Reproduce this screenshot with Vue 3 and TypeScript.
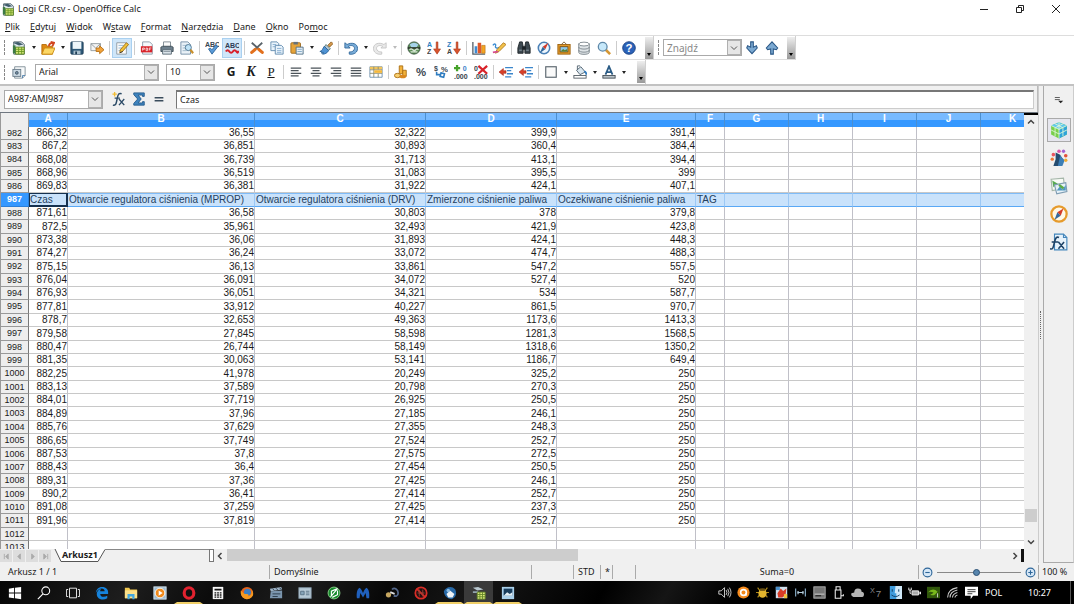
<script setup lang="ts">
import { ref } from 'vue'

const icons: Record<string, string> = {
  calc: '<path d="M2 1h9l3 3v11H2z" fill="#dfe9ee" stroke="#44565f"/><path d="M1 2l6-1 6 3-5 1z" fill="#3f5c6b"/><path d="M4 7h10v8H4z" fill="#d4e57a" stroke="#55801f"/><path d="M4 9.5h10M4 12h10M7.500 7v8M11 7v8" stroke="#6c9a22"/><path d="M1 5h3v9H1z" fill="#3c7a45"/>',
  open: '<path d="M1 4h5l1 2h6v9H1z" fill="#e08a13" stroke="#b56a08"/><path d="M4 8h12l-3 7H1z" fill="#fcd765" stroke="#c98a12"/><path d="M9 6c0-3 2-4 5-4M11 1l4 1-2 4" fill="none" stroke="#d2451e" stroke-width="2"/>',
  save: '<rect x="1" y="1" width="14" height="14" rx="1" fill="#2d5878" stroke="#1d3c55"/><rect x="3" y="1" width="10" height="8" fill="#eef6fa"/><path d="M4 11h8v4H4z" fill="#a9bfcd"/><path d="M6 12h2v3H6z" fill="#1d3c55"/>',
  mail: '<path d="M1 3h11v8H1z" fill="#f4f4f4" stroke="#8e979c"/><path d="M1 3l5.500 5L12 3" fill="none" stroke="#8e979c"/><path d="M7 8h4V5.500l5 4.500-5 4.500V12H7z" fill="#f2a33a" stroke="#b56e14"/>',
  edit: '<path d="M2 2h11v13H2z" fill="#fbfbfb" stroke="#8c98a0"/><path d="M4 5h6M4 8h4M4 11h3" stroke="#8ab0d0"/><path d="M13 2l2.500 2-7 8-3 1.500L6 10z" fill="#f0c23a" stroke="#9a6a12"/><path d="M5.500 13.500L9 12" stroke="#333"/>',
  pdf: '<path d="M3 1h8l3 3v11H3z" fill="#f5f8fb" stroke="#8695a3"/><path d="M1 6h13v7H1z" fill="#d8232a"/><path d="M3 11V8h2v1.500H3M7 8v3h1.500V8zM10.500 11V8H13M10.500 9.500H12" stroke="#fff" fill="none" stroke-width=".8"/>',
  print: '<path d="M4 1h8v6H4z" fill="#fafafa" stroke="#77838b"/><path d="M1 7l2-1h10l2 1v5H1z" fill="#6d7f8c" stroke="#3c4a54"/><path d="M3 10h10v5H3z" fill="#dbe4ea" stroke="#54636e"/><path d="M4 12h8" stroke="#88959e"/>',
  preview: '<path d="M1 1h8l3 3v11H1z" fill="#e9f1f7" stroke="#6e8aa3"/><path d="M3 5h5M3 8h4M3 11h4" stroke="#9cb6ca"/><circle cx="9.500" cy="7.500" r="3.500" fill="#bfe3f7" stroke="#48708d"/><path d="M12 10l3 4" stroke="#c9902c" stroke-width="2.400"/>',
  spell: '<text x="0" y="7" font-size="8" font-weight="700" fill="#3a4652">ABC</text><path d="M4 9l4 6 7-9-3-1-4 5-2-2z" fill="#5b9bd8" stroke="#2f6699"/>',
  autospell: '<text x="0" y="8" font-size="8" font-weight="700" fill="#2d3c55">ABC</text><path d="M1 12q2-3 4 0t4 0 4 0 2-1" fill="none" stroke="#d8202a" stroke-width="2.400"/>',
  cut: '<path d="M2 2l9 8M14 2L5 10" stroke="#59636a" stroke-width="2"/><path d="M10 9.500l4 3.500M6 9.500L2 13" stroke="#e2701d" stroke-width="3.600" stroke-linecap="round"/>',
  copy: '<path d="M1 1h7l2 2v8H1z" fill="#e9f3fb" stroke="#5e88ad"/><path d="M3 4h4M3 6.500h4" stroke="#85add0"/><path d="M6 5h7l2 2v8H6z" fill="#e9f3fb" stroke="#5e88ad"/><path d="M8 8.500h5M8 11h5M8 13h5" stroke="#85add0"/>',
  paste: '<rect x="1" y="2" width="11" height="12" rx="1" fill="#e6a43a" stroke="#9a671a"/><path d="M4 1h5v3H4z" fill="#66737c"/><path d="M7 7h8v8H7z" fill="#e7f1f8" stroke="#4c6b84"/><path d="M8.500 9.500h5M8.500 12h5" stroke="#7ba3c4"/>',
  brush: '<path d="M10 5l4-4 2 2-4 4z" fill="#d69a50" stroke="#8c5b1c"/><path d="M8 4l5 5-3 2-4-4z" fill="#b7c6d1" stroke="#577"/><path d="M6 6l5 5c-2 3-4 4-7 4l1-2-2 1v-2l-2 0c3-1 3-3 5-6z" fill="#4f93d4" stroke="#2c6297"/>',
  undo: '<path d="M1 2v6h6L5 6c4-2 7 0 7 2.500S9 13 6 12.500v2.500c6 1 9.500-2.500 9.500-6.500C15.500 3 9 1 3.500 4z" fill="#79acd8" stroke="#2f6699"/>',
  redo: '<path d="M15 2v6H9l2-2C7 4 4 6 4 8.500S7 13 10 12.500v2.500C4 16 .5 12.500.5 8.500.5 3 7 1 12.500 4z" fill="#e9e9e9" stroke="#c3c3c3"/>',
  globe: '<circle cx="8" cy="8" r="7" fill="#5c8f57" stroke="#334e39"/><path d="M3 4q5-4 10 0l-2 3H5z" fill="#a6d2e9"/><path d="M1 8h14" stroke="#222" stroke-width="1.500"/><path d="M3 10q1.500-2 3.500 0t3.500 0 3 0M4 12.500h8" stroke="#d9e8d7" stroke-width="1.500" fill="none"/>',
  az: '<text x="0" y="7" font-size="8" font-weight="700" fill="#2e7fc2">A</text><text x="0" y="15" font-size="8" font-weight="700" fill="#444">Z</text><path d="M10.500 1h2v8h3L11.500 15 7.500 9h3z" fill="#d8532d" stroke="#a33214" stroke-width=".6"/>',
  za: '<text x="0" y="7" font-size="8" font-weight="700" fill="#2e7fc2">Z</text><text x="0" y="15" font-size="8" font-weight="700" fill="#444">A</text><path d="M10.500 1h2v8h3L11.500 15 7.500 9h3z" fill="#d8532d" stroke="#a33214" stroke-width=".6"/>',
  chart: '<path d="M1 1v14h14" fill="none" stroke="#55606a" stroke-width="1.500"/><path d="M3 6h3v8H3z" fill="#3f8bd0"/><path d="M6.500 2h4v12h-4z" fill="#e0582a"/><path d="M11 5h4v9h-4z" fill="#f5a623" stroke="#a5640d" stroke-width=".6"/>',
  draw: '<path d="M1 5c2-3 4-1 3 1s3 3 4 1" fill="none" stroke="#3a8bd2" stroke-width="1.500"/><path d="M13 2l3 2-8 8-4 2 1.500-4z" fill="#f2c14a" stroke="#b07a1b"/><path d="M1 13l6-1" stroke="#d54a8f" stroke-width="2"/>',
  find: '<path d="M3 1h3l1 5v8H1V8zM10 1h3l2 7v6H9V6z" fill="#3d4850" stroke="#1c2226"/><path d="M6 6h4v4H6z" fill="#1c2226"/><path d="M2.500 10.500h3M10.500 10.500h3" stroke="#94a3ad"/>',
  navigator: '<circle cx="8" cy="8" r="6.500" fill="#eef6fd" stroke="#4a80b6" stroke-width="1.800"/><path d="M13 2L9.500 9.500 6.500 6.500z" fill="#d53a28"/><path d="M3 14l3.500-7.500 3 3z" fill="#34699d"/>',
  gallery: '<rect x="1" y="4" width="14" height="11" fill="#e39a2b" stroke="#99600f"/><path d="M5 4l3-3 3 3" fill="none" stroke="#74552a"/><rect x="3.500" y="6.500" width="9" height="6" fill="#8dc7ec" stroke="#7a4c0a"/><path d="M4 12l3-3 2 1.500 2-1.500 1 3z" fill="#56812f"/>',
  data: '<path d="M2 3v10c0 3 12 3 12 0V3z" fill="#dfe4e7" stroke="#778188"/><ellipse cx="8" cy="3.500" rx="6" ry="2.200" fill="#fff" stroke="#778188"/><path d="M2 7c0 3 12 3 12 0M2 10.500c0 3 12 3 12 0" fill="none" stroke="#778188"/>',
  zoom: '<path d="M10 10l5 5" stroke="#d59734" stroke-width="3"/><circle cx="6.500" cy="6.500" r="5" fill="#c6e8fa" stroke="#5f89a9" stroke-width="1.500"/>',
  help: '<circle cx="8" cy="8" r="7.200" fill="#2b62b8" stroke="#173f80"/><text x="8" y="12.500" font-size="13" font-weight="700" text-anchor="middle" fill="#fff">?</text>',
  styles: '<path d="M3 2h12v10l-3 3H3z" fill="#f7f9fa" stroke="#7b8992"/><rect x="1" y="5" width="9" height="8" fill="#cbd9e3" stroke="#667987"/><circle cx="5.500" cy="9" r="1.600" fill="#7793a8" stroke="#456" stroke-width="1"/><path d="M12 15v-3h3" fill="none" stroke="#4b7fae"/>',
  left: '<path d="M2 3.500h12M2 6.500h9M2 9.500h12M2 12.500h9" stroke="#4b5359" stroke-width="1.300"/>',
  center: '<path d="M2 3.500h12M4 6.500h8M2 9.500h12M4 12.500h8" stroke="#4b5359" stroke-width="1.300"/>',
  right: '<path d="M2 3.500h12M5 6.500h9M2 9.500h12M5 12.500h9" stroke="#4b5359" stroke-width="1.300"/>',
  justify: '<path d="M2 3.500h12M2 6.500h12M2 9.500h12M2 12.500h12" stroke="#4b5359" stroke-width="1.300"/>',
  merge: '<path d="M1 2h14v12H1z" fill="#fff" stroke="#6d8fae"/><path d="M1 2h14v3H1z" fill="#f2c55c"/><path d="M1 5.500h14M1 9.500h14M5.500 2v12M10.500 2v3M10.500 10v4" stroke="#8a8a6d"/><path d="M6 6h9v3H6z" fill="#f6b93b"/>',
  currency: '<path d="M6 1h4v9H6z" fill="#f3b33b" stroke="#a86c10"/><path d="M10 6h4v7h-4z" fill="#f3b33b" stroke="#a86c10"/><ellipse cx="4" cy="12" rx="3.500" ry="2.500" fill="#f8d071" stroke="#a86c10"/><ellipse cx="10" cy="13" rx="4" ry="2" fill="#d9871e"/>',
  percent: '<text x="8" y="13" font-size="13" font-weight="700" text-anchor="middle" fill="#3c4852">%</text>',
  standard: '<text x="0" y="7" font-size="8" font-weight="700" fill="#3c4852">$</text><text x="8" y="8" font-size="9" font-weight="700" fill="#3c4852">%</text><path d="M3 8v3h4M8 9l4 1-1 4-4-1z" fill="none" stroke="#2f7cc0" stroke-width="1.800"/>',
  adddec: '<path d="M3.500 0v7M0 3.500h7" stroke="#46a32a" stroke-width="2.600"/><text x="10" y="7" font-size="8" font-weight="700" fill="#3b82c9">0</text><text x="0" y="15.500" font-size="8" font-weight="700" fill="#333e48">.000</text>',
  deldec: '<text x="0" y="7" font-size="8" font-weight="700" fill="#333e48">0</text><text x="0" y="15.500" font-size="8" font-weight="700" fill="#333e48">.000</text><path d="M5 1l10 9M15 1L5 10" stroke="#d8232a" stroke-width="2.600"/>',
  outdent: '<path d="M7 3h9M9 6.500h5M9 10h7M7 13.500h7" stroke="#3b86cc" stroke-width="1.500"/><path d="M0 8l5-4v2.500h3v3H5V12z" fill="#d8402a" stroke="#9c2414" stroke-width=".6"/>',
  border: '<rect x="2" y="2" width="12" height="12" fill="#fafafa" stroke="#59646d" stroke-width="1.300"/>',
  fill: '<path d="M4 6l5-4 5 6-6 3z" fill="#d9e6ef" stroke="#4a5c6a"/><path d="M5 5V1h3" fill="none" stroke="#4a5c6a"/><path d="M13 7q3 2 1.500 4" stroke="#2f7cc0" stroke-width="2" fill="none"/><rect x="1" y="12" width="14" height="3" fill="#fff" stroke="#505a62"/>',
  font: '<path d="M4 11L8 1.500l4 9.500M5.500 8h5" fill="none" stroke="#2b5c86" stroke-width="2"/><rect x="1" y="12" width="14" height="3" fill="#b9c2c9" stroke="#404a52"/>',
  down: '<path d="M6.500 1h3v6L13 5.500l1 2.500-6 6.500L2 8l1-2.500L6.500 7z" fill="#7ba9d2" stroke="#2a5786" stroke-width="1.200"/>',
  up: '<path d="M6.500 15h3V9L13 10l1.500-2L8 1 1.500 8 3 10l3.500-1z" fill="#7ba9d2" stroke="#2a5786" stroke-width="1.200"/>',
  fx: '<path d="M1 15c4 1 4-3 5-8s2-6 5-5M3 7h6" fill="none" stroke="#2b4a66" stroke-width="1.700"/><path d="M8 8l6 7M14 8l-6 7" stroke="#2b4a66" stroke-width="1.500"/><path d="M3 0v5M.5 2.500h5" stroke="#f0bd35" stroke-width="1.500"/>',
  sum: '<path d="M2 1h12v4h-2V3.500H7L10.500 8 7 12.500h5V11h2v4H2v-2l4.500-5L2 3z" fill="#3f83bd" stroke="#245a8b"/>',
  equals: '<path d="M3 6.500h10M3 10h10" stroke="#3a4c5c" stroke-width="1.800"/>',
  cube: '<path d="M8 1l7 3v8l-7 3.500L1 12V4z" fill="#78cf4b"/><path d="M8 8l7-4v8l-7 3.500z" fill="#2ea3dc"/><path d="M1 4l7-3 7 3-7 3.500z" fill="#62c8ee"/><path d="M8 1v14.500M1 8l7 3.500L15 8M1 4l7 3.500L15 4M4.500 2.500l7 3.500v7.500M11.500 2.500l-7 3.500v7.500" fill="none" stroke="#ddf6d5" stroke-width=".8"/>',
  styleset: '<path d="M5 3l4 2 3 5-2 5H3l2-6z" fill="#244c70"/><path d="M9 6l4 4-2 5H7z" fill="#3d7fb6"/><circle cx="8" cy="2" r="1.600" fill="#dc56a8"/><circle cx="12" cy="2" r="1.500" fill="#a65fd0"/><circle cx="14" cy="6" r="1.600" fill="#e3533a"/><circle cx="3" cy="5" r="1.600" fill="#ea5562"/><circle cx="2" cy="9" r="1.500" fill="#ec7a3b"/><circle cx="14" cy="10" r="1.500" fill="#f0ad35"/>',
  picture: '<path d="M1 2l11-1 1 9-11 2z" fill="#f8fbf6" stroke="#a6b7aa"/><path d="M2 3l5 3-4 3z" fill="#57aa52"/><path d="M4 7l10-2 1 8-9 2z" fill="#e6f1f8" stroke="#7e9cb2"/><path d="M6 12l3-4 2 3 3-4v5z" fill="#4f97be"/><path d="M8 7l4 3" stroke="#5baa43" stroke-width="2"/>',
  compass: '<circle cx="8" cy="8" r="6.800" fill="#fff8e6" stroke="#e69b2c" stroke-width="2"/><path d="M12 3L9.500 9.500 6.500 6.500z" fill="#d53a28"/><path d="M4 13l2.500-6.500 3 3z" fill="#34699d"/>',
  function: '<path d="M4 1h8l3 3v11H4z" fill="#e6f2fb" stroke="#4386bb"/><path d="M12 1v3h3" fill="none" stroke="#4386bb"/><path d="M0 14c3 1 3-2 4-6s2-5 4-4M1.500 8h6M7.500 8l5 6M12.500 8l-5 6" fill="none" stroke="#1e4367" stroke-width="1.400"/>',
  win: '<path d="M1 3l6-.9v5.400H1zM8 2l7-1v6.500H8zM1 8.500h6v5.400L1 13zM8 8.500h7V15l-7-1z" fill="#fff"/>',
  search: '<circle cx="10" cy="5.500" r="4.500" fill="none" stroke="#fff" stroke-width="1.200"/><path d="M6.800 9L1 15" stroke="#fff" stroke-width="1.300"/>',
  tasks: '<path d="M4 2.500h8v11H4zM2.500 4h-2v8h2M13.500 4h2v8h-2" fill="none" stroke="#e8e8e8" stroke-width="1.100"/>',
  edge: '<path d="M1 8c0-4 3-7 7-7 5 0 7 3 7 6v2H6c0 4 5 4 8 2v3c-5 3-12 1-12-5 0-3 2-5 5-6-1 1-1 2-1 3h5c0-5-8-4-10 2z" fill="#1683dc"/>',
  folder: '<path d="M1 2h5l1 2h8v10H1z" fill="#f1c84f"/><path d="M1 5h14v9H1z" fill="#fbe08a"/><path d="M4 9h8v6h-2.500v-3h-3v3H4z" fill="#43a7df"/>',
  media: '<rect x="1" y="1" width="14" height="14" fill="#9dbbd2" stroke="#dce8f0"/><circle cx="8" cy="8" r="5.500" fill="#f08a1c" stroke="#fff"/><path d="M6.500 5l4.500 3-4.500 3z" fill="#fff"/>',
  opera: '<ellipse cx="8" cy="8" rx="5.500" ry="6" fill="none" stroke="#e2222f" stroke-width="3.600"/>',
  calculator: '<path d="M2 1h12v14H2z" fill="#f5f5f5"/><path d="M4 3h8v2H4zM4 7h2v1.500H4zM7 7h2v1.500H7zM10 7h2v1.500h-2zM4 9.500h2V11H4zM7 9.500h2V11H7zM10 9.500h2V11h-2zM4 12h2v1.500H4zM7 12h2v1.500H7zM10 12h2v1.500h-2z" fill="#111"/>',
  firefox: '<circle cx="8" cy="8" r="7" fill="#e8641b"/><circle cx="8.500" cy="7" r="4" fill="#3d7fc4"/><path d="M1 5c2 1 2 4 6 4 2 0 4 1 2 3 4-1 5-4 4-8 5 6 0 11-5 11S0 10 1 5z" fill="#f59a21"/>',
  clapper: '<path d="M2 6l13-1v9H1z" fill="#7b95ad"/><path d="M1 3l13-2 1 3L2 6z" fill="#9db2c5"/><path d="M4 3l2 2M8 2.500l2 2M12 2l2 2M4 9h9M4 12h6" stroke="#263645"/>',
  window: '<rect x="1" y="2" width="14" height="12" fill="#b6c9d6" stroke="#8599a8"/><path d="M3 6h4v4H3zM9 6h4M9 8h4M9 10h4" stroke="#587184" fill="#87a5ba"/>',
  green: '<circle cx="8" cy="8" r="6.800" fill="#178a2c" stroke="#8fd58e"/><path d="M4 12.500L12 3l-7 3v5M12 5v5l-6 3" fill="none" stroke="#fff" stroke-width="1.300"/>',
  malware: '<path d="M1 14c-1-7 1-11 3-12 2 1 3 4 4 6 1-2 2-5 4-6 2 1 4 5 3 12h-3l-1-6-3 5-3-5-1 6z" fill="#2060bd"/>',
  key: '<path d="M8 4c3-3 7 0 7 4s-3 4-5 3" fill="none" stroke="#53678b" stroke-width="2"/><circle cx="4" cy="10" r="3" fill="#c7a760"/><path d="M6 7l5 2" stroke="#ddd" stroke-width="2"/>',
  blocked: '<circle cx="8" cy="8" r="6.500" fill="#211" stroke="#d82d27" stroke-width="2"/><path d="M3 3l10 10" stroke="#d82d27" stroke-width="2"/><path d="M6 4v8M10 4v8M4 8h8" stroke="#9a4238"/>',
  bird: '<path d="M1 6c2-5 9-7 13-2 2 5 1 9-4 11C5 15 1 11 1 6z" fill="#2768a6"/><path d="M4 9l4-4 5 4-2 4H6z" fill="#f0f4f7"/><circle cx="6" cy="5" r="2" fill="#8dbde2"/>',
  office: '<path d="M1 2l6-1 6 3-7 1z" fill="#b8c7cf"/><path d="M1 6h6v2H1z" fill="#93a5b0"/><path d="M6 7h9v8H6z" fill="#dbe87b" stroke="#628527"/><path d="M6 9.700h9M6 12.300h9M9 7v8M12 7v8" stroke="#628527"/>',
  photo: '<path d="M1 1h14v14H1z" fill="#aad0ea"/><path d="M3 3h10v8H3z" fill="#183d5c"/><path d="M3 11l4-4 3 2 3-2v4z" fill="#e3eff6"/>',
  volume: '<path d="M1 6h3l4-4v12l-4-4H1z" fill="none" stroke="#eee"/><path d="M10 5q2 3 0 6M12 3.500q3 4.500 0 9M14 2q4 6 0 12" fill="none" stroke="#eee"/>',
  avast: '<circle cx="8" cy="8" r="7.500" fill="#f58a1c"/><circle cx="8" cy="8" r="3.500" fill="none" stroke="#fff" stroke-width="2"/><path d="M11 9v3" stroke="#fff" stroke-width="2"/>',
  bug: '<path d="M2 2l3 4M14 2l-3 4M0 8h4M12 8h4M2 14l3-4M14 14l-3-4" stroke="#b08a1c" stroke-width="1.400"/><ellipse cx="8" cy="9" rx="5" ry="5.500" fill="#e3b52e"/><path d="M5 3h6v3H5z" fill="#6b5212"/>',
  puzzle: '<rect x="1" y="1" width="14" height="14" fill="#cfe0ee"/><path d="M3 9l4-6 3 3 4-3-1 8-4 3-5 0z" fill="#d93d27"/><path d="M1 1h5v4H1z" fill="#4b90cc"/><path d="M11 10h4v5h-4z" fill="#f1c33e"/>',
  antenna: '<path d="M2 3v10M14 3v10" stroke="#7fa3bd" stroke-width="1.500"/><path d="M4 8h8M5 6v4M11 6v4" stroke="#b3cbdb" stroke-width="1.500"/>',
  disk: '<rect x="1" y="1" width="14" height="14" fill="#767676" stroke="#bbb"/><path d="M2 10h12" stroke="#ddd"/><path d="M3 12h7" stroke="#222" stroke-width="1.500"/>',
  usb: '<path d="M5 1h5v4H5zM4 5h7v10H4zM11 12h3v-2" fill="none" stroke="#eee" stroke-width="1.300"/>',
  cloud: '<path d="M3 13.500q-3.500-1-2.500-4.500L4 8q0-5 4.500-5T13 7q3 0 3 3.500 0 3-2 3z" fill="#b5b5b5"/>',
  x7: '<text x="0" y="9" font-size="9" fill="#888">X</text><text x="7" y="14" font-size="12" fill="#888">7</text>',
  finder: '<rect x="1" y="0" width="15" height="16" fill="#3f9bdc"/><path d="M8 0h8v16H9V9H7z" fill="#d0e8f8"/><path d="M4 4v3M12 4v3M3 11q5 4 10 0" stroke="#123e65" fill="none" stroke-width="1.200"/>',
  battery: '<path d="M5 6h8v5H5z" fill="#aaa" stroke="#eee" stroke-width="1.200"/><path d="M14 7h2v3h-2z" fill="#eee"/><path d="M1 2v3h3V2M2.500 5v4H4" fill="none" stroke="#eee" stroke-width="1.200"/>',
  nvidia: '<rect y="1" width="16" height="14" fill="#31570c"/><path d="M1 8q6-7 12-1-5 7-9 3 2 1 4-2-4-2-7 0z" fill="#78b81a"/><path d="M13 9v5" stroke="#eee"/>',
  wifi: '<path d="M2 14Q2 4 14 2M5 14q0-7 9-9M8 14q0-4 6-6M11 14q0-2 3-3" fill="none" stroke="#ccc" stroke-width="1.300"/>',
  notice: '<path d="M0 1h16v11h-6l-3 4v-4H0z" fill="#fff"/><path d="M3 4.500h10M3 7h10M3 9.500h6" stroke="#111"/>',
}

interface Tool { icon?: string; label?: string; sep?: boolean; menu?: boolean; on?: boolean; off?: boolean; glyph?: string; cls?: string }
const sep: Tool = { sep: true }
const standard: Tool[] = [
  { icon: 'calc', label: 'Nowy', menu: true }, { icon: 'open', label: 'Otwórz', menu: true },
  { icon: 'save', label: 'Zapisz' }, { icon: 'mail', label: 'Wyślij e-mail' }, sep,
  { icon: 'edit', label: 'Edytuj plik', on: true }, sep,
  { icon: 'pdf', label: 'Eksportuj PDF' }, { icon: 'print', label: 'Drukuj' }, { icon: 'preview', label: 'Podgląd' }, sep,
  { icon: 'spell', label: 'Pisownia' }, { icon: 'autospell', label: 'Autopisownia', on: true }, sep,
  { icon: 'cut', label: 'Wytnij' }, { icon: 'copy', label: 'Kopiuj' }, { icon: 'paste', label: 'Wklej', menu: true }, { icon: 'brush', label: 'Malarz formatów' }, sep,
  { icon: 'undo', label: 'Cofnij', menu: true }, { icon: 'redo', label: 'Przywróć', menu: true, off: true }, sep,
  { icon: 'globe', label: 'Hiperłącze' }, { icon: 'az', label: 'Sortuj rosnąco' }, { icon: 'za', label: 'Sortuj malejąco' }, sep,
  { icon: 'chart', label: 'Wykres' }, { icon: 'draw', label: 'Rysunek' }, sep,
  { icon: 'find', label: 'Znajdź i zamień' }, { icon: 'navigator', label: 'Nawigator' }, { icon: 'gallery', label: 'Galeria' },
  { icon: 'data', label: 'Źródła danych' }, { icon: 'zoom', label: 'Powiększenie' }, sep,
  { icon: 'help', label: 'Pomoc' },
]
const formatting: Tool[] = [
  { glyph: 'G', cls: 'bold', label: 'Pogrubienie' }, { glyph: 'K', cls: 'ital', label: 'Kursywa' }, { glyph: 'P', cls: 'under', label: 'Podkreślenie' }, sep,
  { icon: 'left', label: 'Do lewej' }, { icon: 'center', label: 'Do środka' }, { icon: 'right', label: 'Do prawej' }, { icon: 'justify', label: 'Wyjustuj' }, { icon: 'merge', label: 'Scal komórki' }, sep,
  { icon: 'currency', label: 'Waluta' }, { icon: 'percent', label: 'Procent' }, { icon: 'standard', label: 'Format standardowy' }, { icon: 'adddec', label: 'Dodaj miejsce dziesiętne' }, { icon: 'deldec', label: 'Usuń miejsce dziesiętne' }, sep,
  { icon: 'outdent', label: 'Zmniejsz wcięcie' }, { icon: 'outdent', label: 'Zwiększ wcięcie' }, sep,
  { icon: 'border', label: 'Krawędzie', menu: true }, { icon: 'fill', label: 'Kolor tła', menu: true }, { icon: 'font', label: 'Kolor czcionki', menu: true },
]
const menus: [string, string, string][] = [
  ['', 'P', 'lik'], ['', 'E', 'dytuj'], ['', 'W', 'idok'], ['W', 's', 'taw'], ['', 'F', 'ormat'],
  ['', 'N', 'arzędzia'], ['', 'D', 'ane'], ['', 'O', 'kno'], ['Po', 'm', 'oc'],
]
const deck = [
  { icon: 'cube', label: 'Właściwości' }, { icon: 'styleset', label: 'Style' }, { icon: 'picture', label: 'Galeria' },
  { icon: 'compass', label: 'Nawigator' }, { icon: 'function', label: 'Funkcje' },
]
const apps = ['win', 'search', 'tasks', 'edge', 'folder', 'media', 'opera', 'calculator', 'firefox', 'clapper', 'window', 'green', 'malware', 'key', 'blocked', 'bird', 'office', 'photo']
const running = ['opera', 'bird', 'office', 'photo']
const tray = ['volume', 'avast', 'bug', 'puzzle', 'antenna', 'disk', 'usb', 'cloud', 'x7', 'finder', 'battery', 'nvidia', 'wifi', 'notice']

const columns = ['A', 'B', 'C', 'D', 'E', 'F', 'G', 'H', 'I', 'J', 'K']
const FIRST = 982
const SELECTED = 987
const source = `866,32 36,55 32,322 399,9 391,4
867,2 36,851 30,893 360,4 384,4
868,08 36,739 31,713 413,1 394,4
868,96 36,519 31,083 395,5 399
869,83 36,381 31,922 424,1 407,1
-
871,61 36,58 30,803 378 379,8
872,5 35,961 32,493 421,9 423,8
873,38 36,06 31,893 424,1 448,3
874,27 36,24 33,072 474,7 488,3
875,15 36,13 33,861 547,2 557,5
876,04 36,091 34,072 527,4 520
876,93 36,051 34,321 534 587,7
877,81 33,912 40,227 861,5 970,7
878,7 32,653 49,363 1173,6 1413,3
879,58 27,845 58,598 1281,3 1568,5
880,47 26,744 58,149 1318,6 1350,2
881,35 30,063 53,141 1186,7 649,4
882,25 41,978 20,249 325,2 250
883,13 37,589 20,798 270,3 250
884,01 37,719 26,925 250,5 250
884,89 37,96 27,185 246,1 250
885,76 37,629 27,355 248,3 250
886,65 37,749 27,524 252,7 250
887,53 37,8 27,575 272,5 250
888,43 36,4 27,454 250,5 250
889,31 37,36 27,425 246,1 250
890,2 36,41 27,414 252,7 250
891,08 37,259 27,425 237,3 250
891,96 37,819 27,414 252,7 250`
const headings = ['Czas', 'Otwarcie regulatora ciśnienia (MPROP)', 'Otwarcie regulatora ciśnienia (DRV)', 'Zmierzone ciśnienie paliwa', 'Oczekiwane ciśnienie paliwa', 'TAG']
const rows = [...source.split('\n'), '', ''].map((line, i) => {
  const cells = FIRST + i === SELECTED ? headings : line.split(' ')
  return { n: FIRST + i, cells: columns.map((_, c) => cells[c] ?? '') }
})

const content = ref('Czas')
const query = ref('')
const range = ref('A987:AMJ987')
const zoomLevel = ref(48)
</script>

<template>
  <div class="app">
    <header class="title">
      <svg class="ic" viewBox="0 0 16 16" v-html="icons.calc" />
      <span>Logi CR.csv - OpenOffice Calc</span>
      <div class="winbtns">
        <button aria-label="Minimalizuj"><svg viewBox="0 0 10 10"><path d="M1 5.500h8" /></svg></button>
        <button aria-label="Przywróć"><svg viewBox="0 0 10 10"><path d="M1.500 3.500h5v5h-5zM3.500 3V1.500h5v5H7" /></svg></button>
        <button aria-label="Zamknij"><svg viewBox="0 0 10 10"><path d="M1 1l8 8M9 1l-8 8" /></svg></button>
      </div>
    </header>

    <nav class="menu">
      <button v-for="m in menus" :key="m.join('')">{{ m[0] }}<u>{{ m[1] }}</u>{{ m[2] }}</button>
    </nav>

    <div class="bars">
      <div class="bar first">
        <i class="grip" />
        <template v-for="(t, i) in standard" :key="i">
          <i v-if="t.sep" class="sep" />
          <template v-else>
            <button class="tool" :class="{ on: t.on }" :disabled="t.off" :aria-label="t.label">
              <svg class="ic" viewBox="0 0 16 16" v-html="icons[t.icon!]" />
            </button>
            <button v-if="t.menu" class="arrow" :class="{ off: t.off }" :aria-label="t.label + ' – więcej'" />
          </template>
        </template>
        <button class="more" aria-label="Więcej" />
      </div>
      <div class="bar find">
        <i class="grip" />
        <div class="combo search">
          <input v-model="query" placeholder="Znajdź" aria-label="Znajdź">
          <button aria-label="Lista wyszukiwań"><svg viewBox="0 0 8 8"><path d="M1 2.500l3 3 3-3" /></svg></button>
        </div>
        <button class="tool" aria-label="Znajdź następny"><svg class="ic" viewBox="0 0 16 16" v-html="icons.down" /></button>
        <button class="tool" aria-label="Znajdź poprzedni"><svg class="ic" viewBox="0 0 16 16" v-html="icons.up" /></button>
        <button class="more" aria-label="Więcej" />
      </div>
    </div>

    <div class="bars">
      <div class="bar second">
        <i class="grip" />
        <button class="tool" aria-label="Style i formatowanie"><svg class="ic" viewBox="0 0 16 16" v-html="icons.styles" /></button>
        <div class="combo family">
          <select aria-label="Czcionka"><option>Arial</option><option>Verdana</option></select>
          <span class="drop"><svg viewBox="0 0 8 8"><path d="M1 2.500l3 3 3-3" /></svg></span>
        </div>
        <div class="combo size">
          <select aria-label="Rozmiar"><option>10</option><option>12</option></select>
          <span class="drop"><svg viewBox="0 0 8 8"><path d="M1 2.500l3 3 3-3" /></svg></span>
        </div>
        <template v-for="(t, i) in formatting" :key="i">
          <i v-if="t.sep" class="sep" />
          <template v-else>
            <button class="tool" :aria-label="t.label">
              <span v-if="t.glyph" :class="t.cls">{{ t.glyph }}</span>
              <svg v-else class="ic" viewBox="0 0 16 16" v-html="icons[t.icon!]" />
            </button>
            <button v-if="t.menu" class="arrow" :aria-label="t.label + ' – więcej'" />
          </template>
        </template>
        <button class="more" aria-label="Więcej" />
      </div>
    </div>

    <main class="work">
      <section class="doc">
        <div class="formula">
          <div class="combo name">
            <input v-model="range" aria-label="Pole nazwy">
            <button aria-label="Lista nazw"><svg viewBox="0 0 8 8"><path d="M1 2.500l3 3 3-3" /></svg></button>
          </div>
          <button class="tool" aria-label="Kreator funkcji"><svg class="ic" viewBox="0 0 16 16" v-html="icons.fx" /></button>
          <button class="tool" aria-label="Suma"><svg class="ic" viewBox="0 0 16 16" v-html="icons.sum" /></button>
          <button class="tool" aria-label="Funkcja"><svg class="ic" viewBox="0 0 16 16" v-html="icons.equals" /></button>
          <input v-model="content" class="line" aria-label="Wiersz wprowadzania">
        </div>
        <div class="sheetwrap">
          <div class="sheet">
            <table>
              <colgroup>
                <col class="w-n"><col v-for="c in columns" :key="c" :class="'w-' + c">
              </colgroup>
              <thead>
                <tr><th class="corner" /><th v-for="c in columns" :key="c" :class="{ last: c === 'K' }">{{ c }}</th></tr>
              </thead>
              <tbody>
                <tr v-for="r in rows" :key="r.n" :class="{ sel: r.n === SELECTED }">
                  <th>{{ r.n }}</th>
                  <td v-for="(v, c) in r.cells" :key="c">{{ v }}</td>
                </tr>
              </tbody>
            </table>
          </div>
          <div class="vscroll">
            <i class="split" />
            <button aria-label="W górę"><svg viewBox="0 0 8 8"><path d="M1 5.500l3-3 3 3" /></svg></button>
            <i class="track" />
            <i class="thumb" />
            <i class="rest" />
            <button aria-label="W dół"><svg viewBox="0 0 8 8"><path d="M1 2.500l3 3 3-3" /></svg></button>
          </div>
        </div>
        <div class="tabs">
          <button class="nav" aria-label="Pierwszy arkusz"><svg viewBox="0 0 8 8"><path d="M1.500 1v6M6 1L3 4l3 3z" /></svg></button>
          <button class="nav" aria-label="Poprzedni arkusz"><svg viewBox="0 0 8 8"><path d="M5 1L2 4l3 3z" /></svg></button>
          <button class="nav" aria-label="Następny arkusz"><svg viewBox="0 0 8 8"><path d="M3 1l3 3-3 3z" /></svg></button>
          <button class="nav" aria-label="Ostatni arkusz"><svg viewBox="0 0 8 8"><path d="M2 1l3 3-3 3zM6.500 1v6" /></svg></button>
          <svg class="slant" viewBox="0 0 7 13"><path d="M0 0h7v13z" fill="#fff" /><path d="M0 0l6 12.500h1" /></svg>
          <button class="tab">Arkusz1</button>
          <svg class="slant" viewBox="0 0 7 13"><path d="M0 0h7L0 13z" fill="#fff" /><path d="M7 .5L0 12.500" /></svg>
          <i class="tabline" />
          <i class="handle" />
          <button class="hbtn" aria-label="W lewo"><svg viewBox="0 0 8 8"><path d="M5.500 1l-3 3 3 3" /></svg></button>
          <div class="hscroll"><i class="hthumb" /></div>
          <button class="hbtn" aria-label="W prawo"><svg viewBox="0 0 8 8"><path d="M2.500 1l3 3-3 3" /></svg></button>
          <i class="vsplit" />
        </div>
      </section>
      <div class="splitter"><i /></div>
      <aside class="deck">
        <button class="cfg" aria-label="Ustawienia panelu">
          <svg viewBox="0 0 12 12"><path d="M1 3h6M1 5.500h6" stroke="#444" /><path d="M5 7h6L8 10z" fill="#222" /></svg>
        </button>
        <button v-for="(d, i) in deck" :key="d.label" class="panel" :class="{ on: i === 0 }" :aria-label="d.label">
          <svg viewBox="0 0 16 16" v-html="icons[d.icon]" />
        </button>
      </aside>
    </main>

    <footer class="status">
      <span class="s-page">Arkusz 1 / 1</span>
      <span class="s-style">Domyślnie</span>
      <span class="s-ins" />
      <span class="s-std">STD</span>
      <span class="s-mod">*</span>
      <span class="s-sig" />
      <span class="s-sum">Suma=0</span>
      <span class="s-zoom">
        <button aria-label="Pomniejsz"><svg viewBox="0 0 10 10"><circle cx="5" cy="5" r="4" /><path d="M3 5h4" /></svg></button>
        <input v-model="zoomLevel" type="range" min="0" max="100" aria-label="Powiększenie">
        <button aria-label="Powiększ"><svg viewBox="0 0 10 10"><circle cx="5" cy="5" r="4" /><path d="M3 5h4M5 3v4" /></svg></button>
      </span>
      <span class="s-pct">100 %</span>
    </footer>

    <div class="taskbar">
      <button v-for="a in apps" :key="a" class="app-btn" :class="{ run: running.includes(a), cur: a === 'office' }" :aria-label="a">
        <svg viewBox="0 0 16 16" v-html="icons[a]" />
      </button>
      <div class="tray">
        <button v-for="t in tray" :key="t" :aria-label="t"><svg viewBox="0 0 16 16" v-html="icons[t]" /></button>
        <span class="lang">POL</span>
        <time>10:27</time>
        <i class="desk" />
      </div>
    </div>
  </div>
</template>

<style>
body { margin: 0; }
</style>

<style scoped>
.app { display: flex; flex-direction: column; height: 100vh; overflow: hidden; background: #fff; color: #1a1a1a; font: 9px/14px "Noto Sans", "Open Sans", sans-serif; }
.app * { box-sizing: border-box; }
button, input, select { font: inherit; color: inherit; margin: 0; padding: 0; border: 0; background: none; outline: 0; border-radius: 0; }
button { display: flex; align-items: center; justify-content: center; }
i { display: block; flex: none; }
svg { display: block; flex: none; }
.ic { width: 14px; height: 14px; font-family: "Liberation Sans", sans-serif; }

.title { display: flex; align-items: center; height: 18px; flex: none; padding-left: 2px; gap: 3px; }
.title .ic { width: 13px; height: 13px; }
.winbtns { display: flex; margin-left: auto; height: 100%; }
.winbtns button { width: 36px; }
.winbtns svg { width: 10px; height: 10px; fill: none; stroke: #222; }

.menu { display: flex; height: 18px; flex: none; padding-left: 5px; gap: 10px; border-bottom: 1px solid #ddd; }

.bars { display: flex; flex: none; }
.bar { display: flex; align-items: center; height: 24px; border-right: 1px solid #d0d0d0; border-bottom: 1px solid #ddd; }
.first { width: 654px; }
.find { width: 142px; }
.second { width: 646px; border-bottom: 0; }
.grip { width: 1px; height: 15px; margin: 0 4px 0 4px; border-left: 1px dashed #888; }
.tool { width: 20px; height: 20px; flex: none; }
.tool.on { background: #cfe6f9; border: 1px solid #a9d0f0; }
.arrow { width: 9px; height: 20px; flex: none; }
.arrow::after { content: ""; border: 2px solid transparent; border-top: 3px solid #222; border-bottom: 0; }
.arrow.off::after { border-top-color: #bbb; }
.sep { width: 1px; height: 14px; margin: 0 2px; background: #ccc; }
.more { width: 8px; height: 22px; flex: none; margin-left: auto; align-items: flex-end; padding-bottom: 3px; background: linear-gradient(#eee, #999); }
.more::after { content: ""; border: 2px solid transparent; border-top: 3px solid #000; border-bottom: 0; }
.bold { font: bold 12px/16px "Noto Sans", sans-serif; }
.ital { font: italic bold 14px/16px "Liberation Serif", serif; }
.under { font: 13px/14px "Liberation Serif", serif; text-decoration: underline; }

.combo { display: flex; flex: none; height: 17px; border: 1px solid #aaa; background: #fff; }
.combo input { flex: 1; min-width: 0; padding-left: 3px; }
.combo input::placeholder { color: #888; opacity: 1; }
.combo button, .drop { display: flex; align-items: center; justify-content: center; width: 14px; border: 1px solid #b0b0b0; background: #e6e6e6; }
.combo svg { width: 8px; height: 8px; fill: none; stroke: #555; }
.combo select { flex: 1; min-width: 0; padding-left: 3px; appearance: none; }
.search { width: 79px; font-size: 10px; }
.family { width: 124px; margin: 0 7px 0 6px; }
.size { width: 49px; margin-right: 6px; }

.work { display: flex; flex: 1; min-height: 0; background: #f0f0f0; border-top: 2px solid #c2c2c2; }
.doc { display: flex; flex-direction: column; flex: 1; min-width: 0; }
.formula { display: flex; align-items: center; flex: none; height: 26px; padding: 0 3px 0 4px; border-right: 1px solid #bbb; }
.name { width: 99px; height: 19px; margin-right: 6px; }
.line { flex: 1; min-width: 0; height: 19px; margin-left: 7px; padding-left: 3px; background: #fff; border: 1px solid #ccc; border-top: 2px solid #777; border-left: 1px solid #777; }

.sheetwrap { display: flex; flex: 1; min-height: 0; border-top: 1px solid #6f7780; }
.sheet { flex: 1; min-width: 0; overflow: hidden; background: #fff; border-left: 1px solid #999; font: 10px/13px "Liberation Sans", Arial, sans-serif; }
table { width: 100%; table-layout: fixed; border-collapse: separate; border-spacing: 0; }
.w-n { width: 28px; }
.w-A { width: 39px; }
.w-B { width: 187px; }
.w-C { width: 171px; }
.w-D { width: 131px; }
.w-E { width: 139px; }
.w-F { width: 29px; }
.w-G, .w-H, .w-I, .w-J { width: 64px; }
th, td { padding: 0; white-space: nowrap; overflow: hidden; }
thead th { height: 14px; line-height: 12px; vertical-align: top; color: #fff; border-right: 1px solid #4b8fd0; background: linear-gradient(#77baff 50%, #3598ff 50%); }
thead .corner { background: #eee; border-color: #999; }
thead .last { text-align: left; padding-left: 28px; border: 0; }
tbody tr { height: 13px; line-height: 12px; }
tbody tr:nth-child(8n + 3), tbody tr:nth-child(8n + 6), tbody tr:nth-child(8n) { height: 14px; line-height: 13px; }
tbody th { font-size: 9px; font-weight: 400; background: #eee; border-right: 1px solid #777; border-bottom: 1px solid #999; }
tbody td { text-align: right; border-right: 1px solid #c0c0c8; border-bottom: 1px solid #c8c8c8; }
tbody td:last-child { border-right: 0; }
.sel th { color: #fff; font-weight: 700; background: #3598ff; border-color: #2c7fd8; }
.sel td { text-align: left; color: #23405e; background: #c9e2fb; border-right-color: #9cc8f5; border-bottom-color: #5aa8f5; box-shadow: 0 1px #7fbcf8 inset; padding-left: 1px; }
.sel td:nth-child(2) { box-shadow: 0 0 0 1px #14304f inset; border-color: #14304f; }

.vscroll { display: flex; flex-direction: column; width: 14px; flex: none; background: #f0f0f0; }
.split { height: 2px; background: #000; }
.vscroll button { height: 14px; flex: none; }
.vscroll svg, .hbtn svg { width: 8px; height: 8px; fill: none; stroke: #444; stroke-width: 1.5; }
.track { flex: 1; }
.thumb { width: 12px; height: 13px; margin-left: 1px; background: #cdcdcd; }
.rest { height: 13px; }

.tabs { display: flex; flex: none; height: 14px; }
.nav { width: 13px; height: 12px; margin: 1px 0 0 0; background: #ddd; border-right: 1px solid #f0f0f0; }
.nav svg { width: 7px; height: 7px; fill: #aaa; stroke: #aaa; }
.slant { width: 7px; height: 13px; fill: none; stroke: #555; overflow: visible; }
.slant path:first-child { stroke: none; }
.nav + .slant { margin-left: 3px; }
.tab { height: 13px; padding: 0; background: #fff; border-bottom: 1px solid #555; font-weight: 700; font-size: 9px; line-height: 12px; }
.tabline { flex: 0 1 104px; height: 1px; background: #888; }
.handle { width: 5px; height: 13px; border: 1px solid #777; background: #fff; }
.hbtn { width: 13px; flex: none; }
.hscroll { flex: 1; background: #f0f0f0; height: 13px; }
.hthumb { width: 45%; height: 12px; background: #cdcdcd; }
.vsplit { width: 3px; height: 13px; margin-right: 14px; background: #111; }

.splitter { display: flex; align-items: center; width: 6px; flex: none; border-right: 1px solid #aaa; border-left: 1px solid #ccc; }
.splitter i { height: 28px; width: 1px; margin-left: 1px; border-left: 1px dotted #666; }
.deck { display: flex; flex-direction: column; align-items: center; width: 30px; flex: none; gap: 4px; border-right: 1px solid #ccc; border-bottom: 1px solid #aaa; }
.cfg { height: 28px; }
.cfg svg { width: 10px; height: 10px; }
.panel { width: 24px; height: 24px; flex: none; border: 1px solid transparent; }
.panel.on { border-color: #aaa; background: #e6e6ee; }
.panel svg { width: 18px; height: 18px; }

.status { display: flex; align-items: center; flex: none; height: 18px; background: #f0f0f0; }
.status > span { flex: none; height: 14px; padding-left: 4px; border-right: 1px solid #aaa; }
.status .s-page { width: 270px; padding-left: 8px; }
.s-style { width: 262px; }
.s-ins { width: 42px; }
.s-std { width: 27px; }
.s-mod { width: 12px; }
.s-sig { width: 23px; }
.status .s-sum { flex: 1; text-align: center; padding: 0; }
.status .s-zoom { display: flex; align-items: center; justify-content: center; gap: 4px; width: 120px; padding: 0; }
.s-zoom svg { width: 11px; height: 11px; fill: #d6e8f8; stroke: #2d6598; }
.s-zoom input { width: 84px; height: 12px; appearance: none; background: linear-gradient(#888, #888) center / 100% 1px no-repeat; }
.s-zoom input::-webkit-slider-thumb { appearance: none; width: 7px; height: 7px; border-radius: 50%; background: #5785ad; border: 1px solid #2b5074; }
.status .s-pct { width: 35px; padding-left: 3px; border: 0; }

.taskbar { display: flex; flex: none; height: 23px; color: #fff; background: linear-gradient(120deg, #060606 0, #1d1d1d 12%, #0c0c0c 20%, #1c1c1c 28%, #080808 36%, #161616 44%, #000 56%, #151515 62%, #000 68%); }
.app-btn { width: 29px; height: 23px; flex: none; border: solid transparent; border-width: 2px 3px; }
.app-btn.run { border-bottom-color: #f0cf68; }
.app-btn.cur { background: #3a3a3a; }
.app-btn svg { width: 14px; height: 14px; }
.tray { display: flex; align-items: center; margin-left: auto; }
.tray button { width: 19px; }
.tray svg { width: 13px; height: 13px; overflow: visible; font-family: "Liberation Sans", sans-serif; }
.lang { width: 44px; padding-left: 4px; }
time { width: 45px; padding-left: 3px; }
.desk { width: 4px; height: 23px; border-left: 1px solid #555; }
</style>
